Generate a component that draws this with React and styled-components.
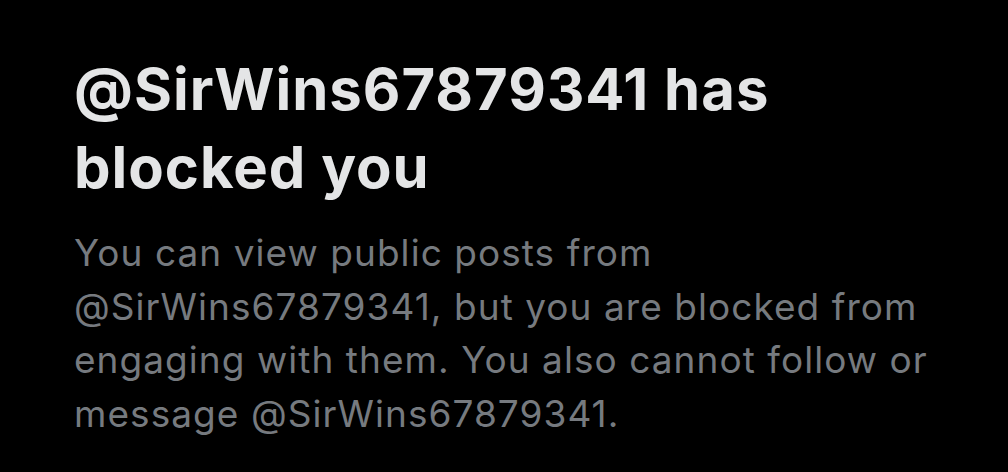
import React from 'react';
import styled, { createGlobalStyle } from 'styled-components';

const GlobalStyle = createGlobalStyle`
  html, body {
    margin: 0;
    padding: 0;
    background: #000000;
  }
`;

const Screen = styled.div`
  width: 1008px;
  height: 472px;
  background: #000000;
  box-sizing: border-box;
  padding: 50px 0 0 74px;
  font-family: Inter, "Noto Sans", Arial, sans-serif;
  overflow: hidden;
`;

const Content = styled.div`
  width: 880px;
  display: flex;
  flex-direction: column;
  gap: 20px;
`;

const Title = styled.h1`
  margin: 0;
  font-size: 58px;
  font-weight: 700;
  line-height: 78px;
  letter-spacing: 1px;
  color: #e4e5e6;
`;

const Body = styled.p`
  margin: 0;
  font-size: 37px;
  font-weight: 400;
  line-height: 53.5px;
  letter-spacing: 1.05px;
  color: #767a7f;
`;

export default function App() {
  const handle = '@SirWins67879341';
  return (
    <>
      <GlobalStyle />
      <Screen>
        <Content>
          <Title>{handle} has blocked you</Title>
          <Body>
            You can view public posts from {handle}, but you are blocked from engaging with
            them. You also cannot follow or message {handle}.
          </Body>
        </Content>
      </Screen>
    </>
  );
}
